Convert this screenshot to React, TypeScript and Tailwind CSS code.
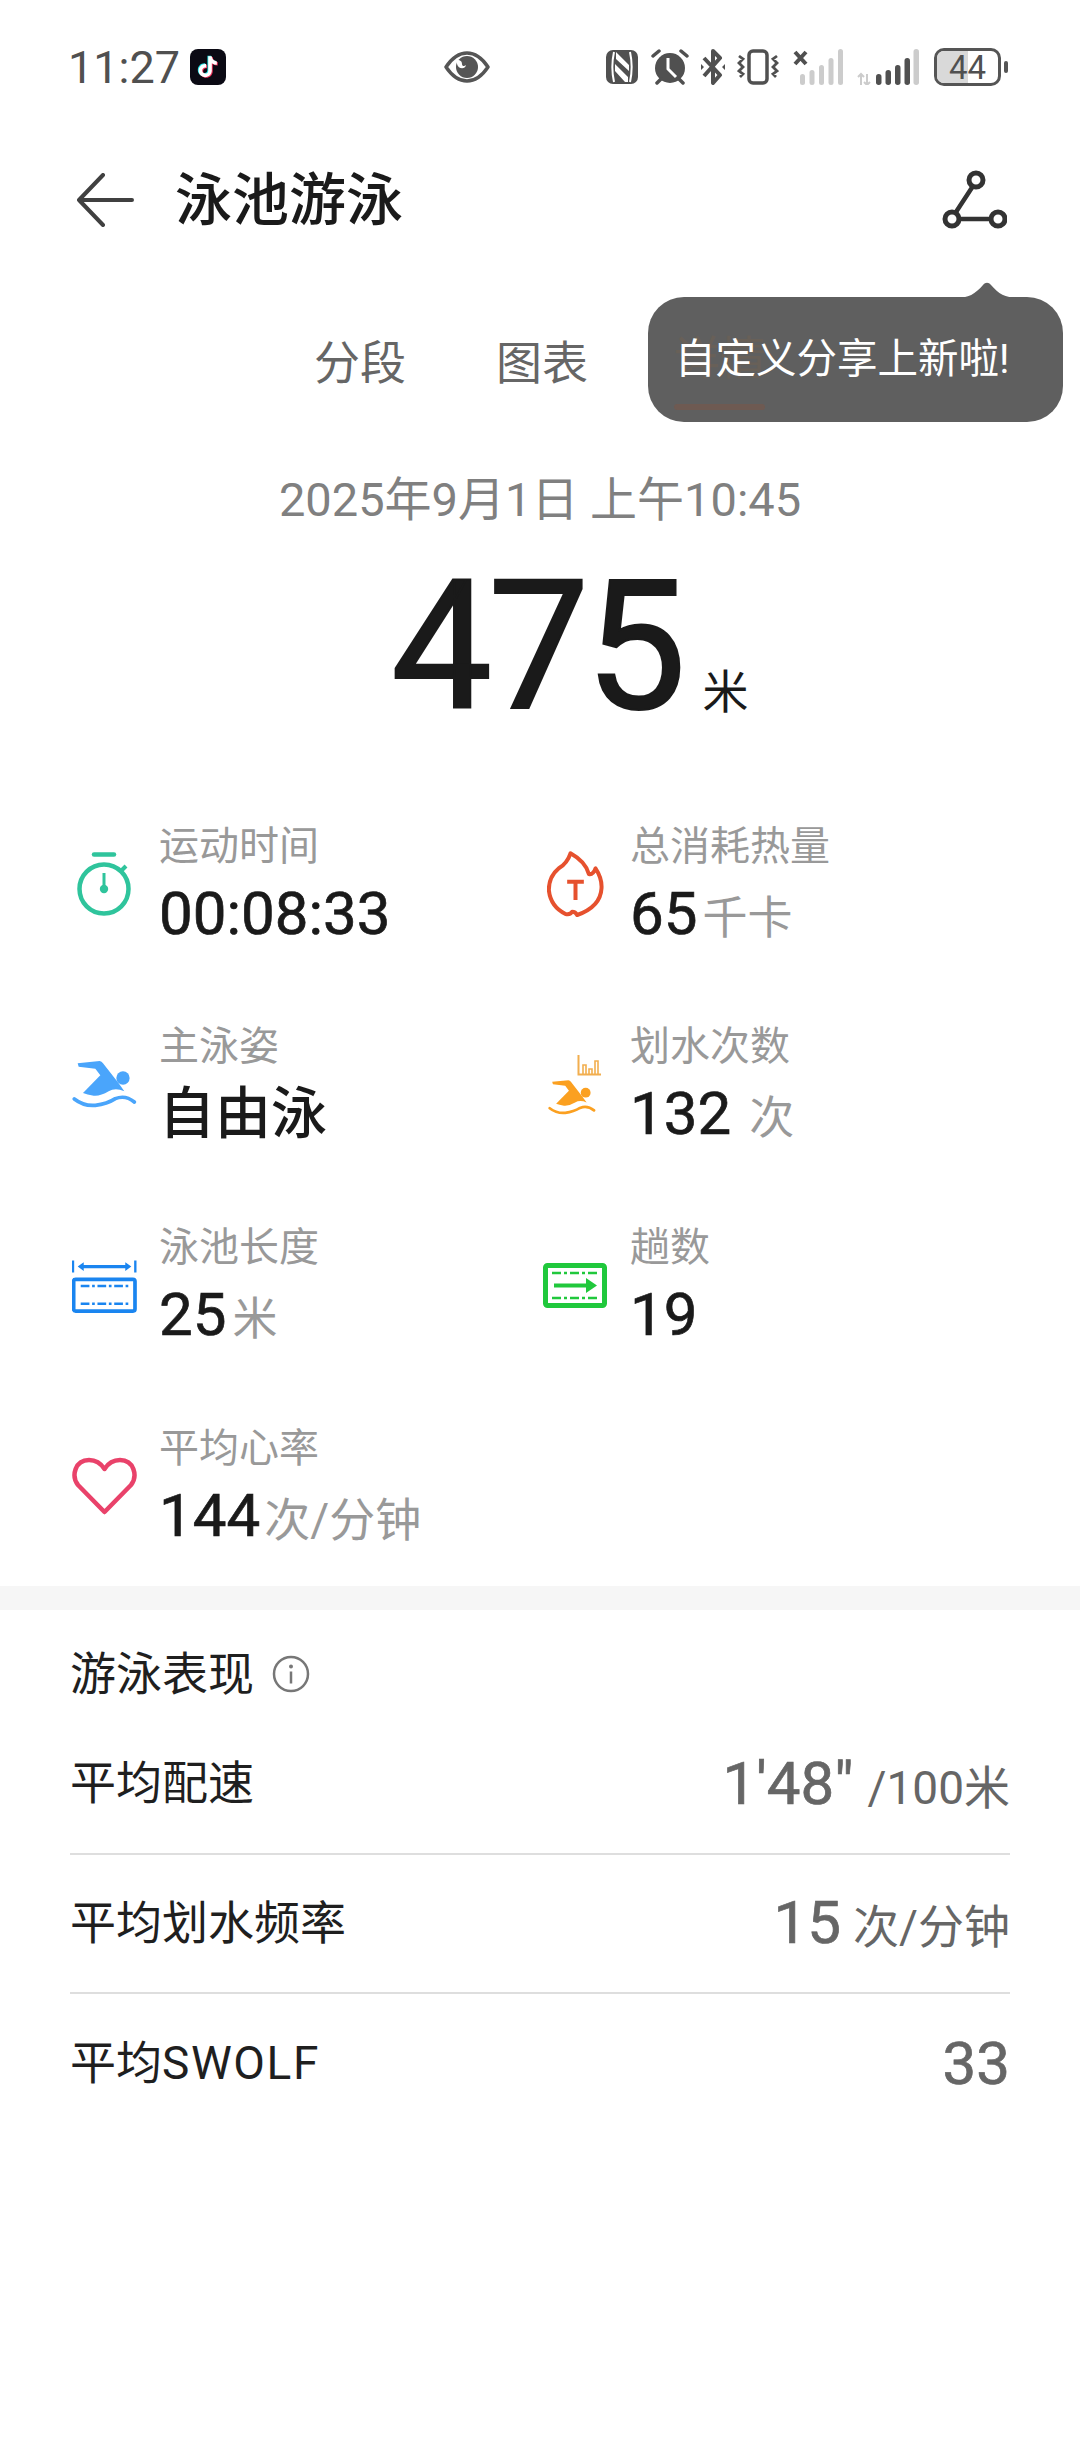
import React from "react";

const CJK = "font-['Roboto','Noto_Sans_CJK_SC',sans-serif]";

const note =
  "M16.6 5.82A4.28 4.28 0 0 1 15.54 3h-3.09v12.4a2.59 2.59 0 0 1-2.59 2.5c-1.42 0-2.6-1.16-2.6-2.6 0-1.72 1.66-3.01 3.37-2.48V9.66c-3.45-.46-6.47 2.22-6.47 5.64 0 3.33 2.76 5.7 5.69 5.7 3.14 0 5.69-2.55 5.69-5.7V9.01a7.35 7.35 0 0 0 4.3 1.38V7.3s-1.88.09-3.24-1.48z";

function TikTok() {
  return (
    <svg width="36" height="36" viewBox="0 0 36 36" className="ml-[10px]">
      <rect width="36" height="36" rx="8" fill="#0b0a14" />
      <g transform="translate(3.8 3.8) scale(1.16)">
        <path d={note} fill="#25e4e8" transform="translate(-.7 -.5)" />
        <path d={note} fill="#f0305a" transform="translate(.8 .6)" />
        <path d={note} fill="#ffffff" />
      </g>
    </svg>
  );
}

function Eye() {
  return (
    <svg width="46" height="32" viewBox="0 0 46 32" className="ml-[218px]">
      <path d="M2 16C8 7 15 2 23 2s15 5 21 14c-6 9-13 14-21 14S8 25 2 16z" fill="none" stroke="#555" strokeWidth="3.500" strokeLinejoin="round" />
      <circle cx="23" cy="16" r="11" fill="#555" />
      <path d="M13 9c4 0 5 2 5 4s2 3 4 1c-1 5-8 4-9-1z" fill="#fff" />
    </svg>
  );
}

function Nfc() {
  return (
    <svg width="32" height="34" viewBox="0 0 32 34">
      <rect width="32" height="34" rx="7" fill="#505050" />
      <path d="M8 2c-2 9-2 21 0 30M24 2c2 9 2 21 0 30" stroke="#fff" strokeWidth="2" fill="none" />
      <path d="M10 2l13 13v6L10 9zM9 14l13 13v5h-3L9 21z" fill="#fff" />
    </svg>
  );
}

function Alarm() {
  return (
    <svg width="38" height="36" viewBox="0 0 38 36" className="ml-[13px]">
      <circle cx="19" cy="19" r="15" fill="#505050" />
      <path d="M2 7l6-5M36 7l-6-5M6 34l4-4M32 34l-4-4" stroke="#505050" strokeWidth="3.500" strokeLinecap="round" />
      <path d="M17 9v11l8 8" stroke="#fff" strokeWidth="3" fill="none" />
    </svg>
  );
}

function Bluetooth() {
  return (
    <svg width="24" height="36" viewBox="0 0 24 36" className="ml-[12px]">
      <path d="M3 9l16 17-7 8V2l7 7L3 27" stroke="#505050" strokeWidth="4" fill="none" strokeLinejoin="round" />
      <path d="M0 15l3 3-3 3zM24 15l-3 3 3 3z" fill="#505050" />
    </svg>
  );
}

function Vibrate() {
  return (
    <svg width="42" height="36" viewBox="0 0 42 36" className="ml-[12px]">
      <rect x="12" y="2" width="18" height="32" rx="4" fill="none" stroke="#505050" strokeWidth="3.500" />
      <path d="M2 7l4 3-4 4 4 4-4 4 4 3-3 3M40 7l-4 3 4 4-4 4 4 4-4 3 3 3" fill="none" stroke="#505050" strokeWidth="2.800" />
    </svg>
  );
}

function SignalA() {
  return (
    <svg width="50" height="36" viewBox="0 0 50 36" className="ml-[14px]">
      <path d="M2 3l11 12M13 3L2 15" stroke="#505050" strokeWidth="4" />
      <rect x="7" y="25" width="5" height="11" rx="2.500" fill="#ccc" />
      <rect x="16.500" y="21" width="5" height="15" rx="2.500" fill="#ccc" />
      <rect x="26" y="16" width="5" height="20" rx="2.500" fill="#ccc" />
      <rect x="35.500" y="9" width="5" height="27" rx="2.500" fill="#ccc" />
      <rect x="45" y="0" width="5" height="36" rx="2.500" fill="#ccc" />
    </svg>
  );
}

function SignalB() {
  return (
    <svg width="62" height="36" viewBox="0 0 62 36" className="ml-[14px]">
      <path d="M4 36V25M1 28l3-3 3 3M10 25v11M7 33l3 3 3-3" stroke="#ccc" strokeWidth="2" fill="none" />
      <rect x="19" y="25" width="5.500" height="11" rx="2.700" fill="#505050" />
      <rect x="28.500" y="21" width="5.500" height="15" rx="2.700" fill="#505050" />
      <rect x="38" y="16" width="5.500" height="20" rx="2.700" fill="#505050" />
      <rect x="47.500" y="9" width="5.500" height="27" rx="2.700" fill="#505050" />
      <rect x="56.500" y="0" width="5.500" height="36" rx="2.700" fill="#ccc" />
    </svg>
  );
}

function Battery() {
  return (
    <div className="ml-[15px] flex items-center">
      <div className="relative h-[38px] w-[67px] overflow-hidden rounded-[10px] border-[3px] border-[#555] bg-white">
        <div className="h-full w-[50%] bg-[#d9d9d9]" />
        <span className={`absolute inset-0 flex items-center justify-center text-[33px] leading-none text-[#505050] ${CJK}`}>44</span>
      </div>
      <div className="ml-[3px] h-[12px] w-[4px] rounded-sm bg-[#555]" />
    </div>
  );
}

function Stopwatch() {
  return (
    <svg width="54" height="64" viewBox="0 0 54 64">
      <path d="M17 2.500h20" stroke="#2fc49c" strokeWidth="4.500" strokeLinecap="round" />
      <circle cx="27" cy="37" r="24.500" fill="none" stroke="#2fc49c" strokeWidth="4.500" />
      <path d="M45 18l4-4" stroke="#2fc49c" strokeWidth="4" />
      <path d="M27 21v12" stroke="#2fc49c" strokeWidth="3" />
      <circle cx="27" cy="37" r="4.200" fill="#2fc49c" />
    </svg>
  );
}

function Flame() {
  return (
    <svg width="57" height="66" viewBox="80 153 170 198">
      <path d="M150 160Q140 190 115 205Q85 230 85 270Q90 320 135 342Q150 345 155 335Q165 335 170 345Q240 320 243 265Q245 235 225 205Q218 225 205 222Q195 185 150 160Z" fill="none" stroke="#e6512e" strokeWidth="12" strokeLinejoin="round" />
      <path d="M140 245h50M165 245v55" stroke="#e6512e" strokeWidth="12" />
    </svg>
  );
}

function SwimShape({ color }: { color: string }) {
  return (
    <g fill={color}>
      <path d="M112 796L178 789Q184 790 188 796L235 856L252 880Q225 868 205 880Q180 895 160 893Q140 890 128 885L180 832L165 812L115 806Z" />
      <circle cx="248" cy="840" r="20" />
      <path d="M102 903Q130 925 165 922Q200 918 225 902Q255 890 282 912" fill="none" stroke={color} strokeWidth="11" strokeLinecap="round" />
    </g>
  );
}

function SwimBlue() {
  return (
    <svg width="65" height="49" viewBox="95 786 195 147">
      <SwimShape color="#4aa5fb" />
    </svg>
  );
}

function SwimOrange() {
  return (
    <div className="relative flex h-[66px] w-[62px] items-end justify-start">
      <svg width="48" height="37" viewBox="95 786 195 147" className="mb-[2px] ml-[3px]">
        <SwimShape color="#fba020" />
      </svg>
      <svg width="24" height="21" viewBox="0 0 24 21" className="absolute right-[6px] top-[3px]">
        <path d="M1.500 0v19.500H24" fill="none" stroke="#f2ae4e" strokeWidth="2" />
        <path d="M6 19v-9h3v9M12 19v-5h3v5M18 19V6h3v13" fill="none" stroke="#f2ae4e" strokeWidth="1.600" />
      </svg>
    </div>
  );
}

function Pool() {
  return (
    <svg width="65" height="54" viewBox="96 178 194 160">
      <path d="M99 182v36M285 182v36" stroke="#1a85f0" strokeWidth="7" />
      <path d="M128 200h130" stroke="#1a85f0" strokeWidth="10" />
      <path d="M113 200l18-13v26zM273 200l-18-13v26z" fill="#1a85f0" />
      <rect x="101" y="238" width="183" height="95" rx="6" fill="none" stroke="#1a85f0" strokeWidth="11" />
      <path d="M122 258h143M122 311h143" stroke="#1a85f0" strokeWidth="7" strokeDasharray="26 8 8 8" />
    </svg>
  );
}

function Trail() {
  return (
    <svg width="64" height="45" viewBox="0 0 64 45">
      <rect x="2.500" y="2.500" width="59" height="40" rx="2" fill="none" stroke="#20c83c" strokeWidth="5" />
      <path d="M9 10h46M9 35h46" stroke="#20c83c" strokeWidth="2.500" strokeDasharray="9 3 3 3" />
      <path d="M11 22.500h33" stroke="#20c83c" strokeWidth="4" />
      <path d="M43 15l11 7.500-11 7.500z" fill="#20c83c" />
    </svg>
  );
}

function Heart() {
  return (
    <svg width="65" height="58" viewBox="0 0 65 58">
      <path d="M32.500 55L6 28C-1 19 3 3 17 3c7 0 12 3.500 15.500 9C36 6.500 41 3 48 3c14 0 18 16 11 25z" fill="none" stroke="#e9426a" strokeWidth="4.500" strokeLinejoin="round" />
    </svg>
  );
}

function Stat({ icon, label, children, iconBox }: { icon: React.ReactNode; label: string; children: React.ReactNode; iconBox: string }) {
  return (
    <div className="flex h-[200.67px] items-center">
      <div className={`flex shrink-0 items-center justify-center ${iconBox}`}>{icon}</div>
      <div className="flex flex-col pt-[3px]">
        <div className="h-[56px] text-[40px] leading-[56px] text-[#999999]">{label}</div>
        <div className="flex h-[78px] items-baseline whitespace-nowrap leading-[78px]">{children}</div>
      </div>
    </div>
  );
}

function Num({ children }: { children: React.ReactNode }) {
  return <span className="text-[60px] font-normal text-[#1a1a1a] [-webkit-text-stroke:0.7px]">{children}</span>;
}
function Unit({ children, className = "" }: { children: React.ReactNode; className?: string }) {
  return <span className={`text-[45px] text-[#999999] ${className}`}>{children}</span>;
}

function Row({ label, children, border = true }: { label: React.ReactNode; children: React.ReactNode; border?: boolean }) {
  return (
    <div className={`flex h-[139.5px] items-center justify-between ${border ? "border-b-2 border-[#dedede]" : ""}`}>
      <span className="text-[46px] text-[#1f1f1f]">{label}</span>
      <span className="flex items-baseline whitespace-nowrap text-[#666666]">{children}</span>
    </div>
  );
}

export default function App() {
  return (
    <div className={`relative h-[2438px] w-[1080px] overflow-hidden bg-white ${CJK}`}>
      {/* status bar */}
      <div className="flex h-[134px] items-center pl-[68px] pr-[72px]">
        <span className="text-[45px] leading-none text-[#505050]">11:27</span>
        <TikTok />
        <Eye />
        <div className="ml-auto flex items-center">
          <Nfc />
          <Alarm />
          <Bluetooth />
          <Vibrate />
          <SignalA />
          <SignalB />
          <Battery />
        </div>
      </div>

      {/* header */}
      <div className="flex h-[132px] items-center pl-[76px] pr-[73px]">
        <svg width="58" height="54" viewBox="0 0 58 54">
          <path d="M56 27H3M27 2L3 27l24 25" fill="none" stroke="#404040" strokeWidth="4" strokeLinecap="round" strokeLinejoin="round" />
        </svg>
        <h1 className="ml-[41px] text-[57px] font-medium leading-none text-[#1a1a1a]">泳池游泳</h1>
        <svg width="66" height="60" viewBox="0 0 66 60" className="ml-auto">
          <path d="M32 16L15 42M18 49h30" stroke="#333" strokeWidth="4.500" />
          <circle cx="35" cy="10" r="7" fill="#fff" stroke="#333" strokeWidth="5" />
          <circle cx="11" cy="49" r="7" fill="#fff" stroke="#333" strokeWidth="5" />
          <circle cx="57" cy="49" r="7" fill="#fff" stroke="#333" strokeWidth="5" />
        </svg>
      </div>

      {/* tabs */}
      <div className="flex h-[184px] items-start gap-[90px] pl-[314px] pt-[69px] text-[46px] leading-[56px] text-[#666666]">
        <span>分段</span>
        <span>图表</span>
      </div>

      {/* date */}
      <div className="mt-[7px] flex h-[86px] items-center justify-center text-[47px] text-[#808080]">2025年9月1日 上午10:45</div>

      {/* big number */}
      <div className="flex h-[241px] items-baseline pl-[391px] pt-[29px]">
        <span className="text-[180px] font-normal leading-[150px] tracking-[-4px] text-[#1a1a1a] [-webkit-text-stroke:2px]">475</span>
        <span className="ml-[20px] text-[46px] text-[#1a1a1a]">米</span>
      </div>

      {/* stats */}
      <div className="grid grid-cols-2">
        <Stat iconBox="ml-[77px] w-[54px] mr-[28px]" icon={<Stopwatch />} label="运动时间">
          <Num>00:08:33</Num>
        </Stat>
        <Stat iconBox="ml-[7px] w-[57px] mr-[26px]" icon={<Flame />} label="总消耗热量">
          <Num>65</Num>
          <Unit className="ml-[5px]">千卡</Unit>
        </Stat>
        <Stat iconBox="ml-[72px] w-[65px] mr-[22px]" icon={<SwimBlue />} label="主泳姿">
          <span className="text-[56px] font-medium text-[#1a1a1a]">自由泳</span>
        </Stat>
        <Stat iconBox="ml-[5px] w-[62px] mr-[23px]" icon={<SwimOrange />} label="划水次数">
          <Num>132</Num>
          <Unit className="ml-[18px]">次</Unit>
        </Stat>
        <Stat iconBox="ml-[72px] w-[65px] mr-[22px]" icon={<Pool />} label="泳池长度">
          <Num>25</Num>
          <Unit className="ml-[6px]">米</Unit>
        </Stat>
        <Stat iconBox="ml-[3px] w-[64px] mr-[23px]" icon={<Trail />} label="趟数">
          <Num>19</Num>
        </Stat>
        <Stat iconBox="ml-[72px] w-[65px] mr-[22px]" icon={<Heart />} label="平均心率">
          <Num>144</Num>
          <Unit className="ml-[4px] text-[46px]">次/分钟</Unit>
        </Stat>
      </div>

      {/* band */}
      <div className="-mt-[1px] h-[24px] bg-[#f6f6f6]" />

      {/* performance */}
      <div className="px-[70px]">
        <div className="flex h-[105.500px] items-center gap-[18px] pt-[24px]">
          <span className="text-[46px] text-[#1f1f1f]">游泳表现</span>
          <svg width="38" height="38" viewBox="0 0 38 38">
            <circle cx="19" cy="19" r="17" fill="none" stroke="#777" strokeWidth="2.500" />
            <circle cx="19" cy="11.500" r="2" fill="#777" />
            <path d="M19 16.500v12" stroke="#777" strokeWidth="2.500" />
          </svg>
        </div>
        <Row label="平均配速">
          <span className="text-[60px] [-webkit-text-stroke:0.7px]">1'48"</span>
          <span className="ml-[14px] text-[46px]">/100米</span>
        </Row>
        <Row label="平均划水频率">
          <span className="text-[60px] [-webkit-text-stroke:0.7px]">15</span>
          <span className="ml-[12px] text-[46px]">次/分钟</span>
        </Row>
        <Row label={<>平均<span className="tracking-[1.6px]">SWOLF</span></>} border={false}>
          <span className="text-[60px] [-webkit-text-stroke:0.7px]">33</span>
        </Row>
      </div>

      {/* tooltip */}
      <div className="absolute left-[648px] top-[297px] h-[125px] w-[415px] rounded-[36px] bg-[#5f5f5f]">
        <svg width="64" height="17" viewBox="0 0 64 17" className="absolute left-[307px] top-[-16px]">
          <path d="M0 17c14 0 20-4 28-13 2.500-3 5.500-3 8 0 8 9 14 13 28 13z" fill="#5f5f5f" />
        </svg>
        <span className="absolute left-[26px] top-[33px] text-[46px] leading-[56px] text-[#686058]">详情</span>
        <div className="absolute left-[26px] top-[107px] h-[6px] w-[91px] rounded-full bg-[#6e5a52]" />
        <span className="absolute left-[27px] top-[34px] whitespace-nowrap text-[40.500px] leading-[56px] text-white">自定义分享上新啦!</span>
      </div>
    </div>
  );
}
